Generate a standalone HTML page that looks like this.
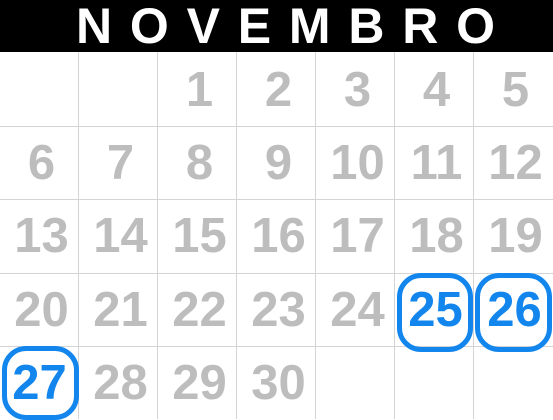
<!DOCTYPE html><html><head><style>
body{margin:0;width:553px;height:419px;overflow:hidden;background:#fff;font-family:"Liberation Sans",sans-serif;position:relative}
.h{position:absolute;left:0;top:0;width:553px;height:52px;background:#000;color:#fff;font-weight:bold;font-size:50px;line-height:52px;text-align:left;letter-spacing:17.8px;box-sizing:border-box;padding-left:76px;white-space:nowrap}
.c{position:absolute;width:79px;height:73px;text-align:center;font-weight:bold;font-size:49px;line-height:73px;color:#bdbdbd}
.v{position:absolute;background:#d4d4d4}
.b{color:#1386ee}
.r{position:absolute;border:5px solid #1386ee;border-radius:24px}
</style></head><body>
<div class="h">NOVEMBRO</div>
<div class="v" style="left:78px;top:52px;width:1px;height:367px"></div>
<div class="v" style="left:157px;top:52px;width:1px;height:367px"></div>
<div class="v" style="left:236px;top:52px;width:1px;height:367px"></div>
<div class="v" style="left:315px;top:52px;width:1px;height:367px"></div>
<div class="v" style="left:394px;top:52px;width:1px;height:367px"></div>
<div class="v" style="left:473px;top:52px;width:1px;height:367px"></div>
<div class="v" style="left:0;top:126px;width:553px;height:1px"></div>
<div class="v" style="left:0;top:199px;width:553px;height:1px"></div>
<div class="v" style="left:0;top:273px;width:553px;height:1px"></div>
<div class="v" style="left:0;top:346px;width:553px;height:1px"></div>
<div class="c" style="left:160px;top:54px">1</div>
<div class="c" style="left:239px;top:54px">2</div>
<div class="c" style="left:318px;top:54px">3</div>
<div class="c" style="left:397px;top:54px">4</div>
<div class="c" style="left:476px;top:54px">5</div>
<div class="c" style="left:2px;top:127px">6</div>
<div class="c" style="left:81px;top:127px">7</div>
<div class="c" style="left:160px;top:127px">8</div>
<div class="c" style="left:239px;top:127px">9</div>
<div class="c" style="left:318px;top:127px">10</div>
<div class="c" style="left:397px;top:127px">11</div>
<div class="c" style="left:476px;top:127px">12</div>
<div class="c" style="left:2px;top:200px">13</div>
<div class="c" style="left:81px;top:200px">14</div>
<div class="c" style="left:160px;top:200px">15</div>
<div class="c" style="left:239px;top:200px">16</div>
<div class="c" style="left:318px;top:200px">17</div>
<div class="c" style="left:397px;top:200px">18</div>
<div class="c" style="left:476px;top:200px">19</div>
<div class="c" style="left:2px;top:274px">20</div>
<div class="c" style="left:81px;top:274px">21</div>
<div class="c" style="left:160px;top:274px">22</div>
<div class="c" style="left:239px;top:274px">23</div>
<div class="c" style="left:318px;top:274px">24</div>
<div class="c b" style="left:396px;top:274px">25</div>
<div class="c b" style="left:475px;top:274px">26</div>
<div class="c b" style="left:0;top:347px">27</div>
<div class="c" style="left:81px;top:347px">28</div>
<div class="c" style="left:160px;top:347px">29</div>
<div class="c" style="left:239px;top:347px">30</div>
<div class="r" style="left:397px;top:273px;width:66px;height:69px"></div>
<div class="r" style="left:475px;top:273px;width:67px;height:69px"></div>
<div class="r" style="left:2px;top:346px;width:67px;height:64px"></div>
</body></html>
